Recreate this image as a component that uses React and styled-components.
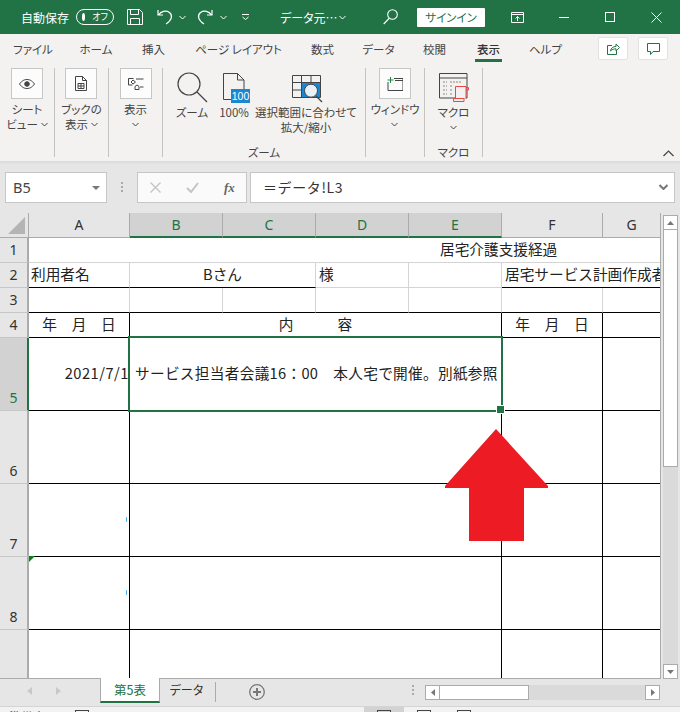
import React from 'react'
import styled, { createGlobalStyle } from 'styled-components'

const GREEN = '#217346'
const CJK = '"Noto Sans CJK JP", "Liberation Sans", sans-serif'

const GlobalStyle = createGlobalStyle`
  html, body { margin: 0; padding: 0; background: #e6e6e6; }
  body { font-family: ${CJK}; overflow: hidden; }
  * { box-sizing: border-box; }
`

const Window = styled.div`
  width: 680px;
  height: 712px;
  display: flex;
  flex-direction: column;
  overflow: hidden;
  font-feature-settings: "palt";
`

/* title bar */
const TitleBar = styled.div`
  height: 34px;
  flex: none;
  background: ${GREEN};
  color: #fff;
  display: flex;
  align-items: center;
  padding-left: 21px;
  font-size: 12px;
`
const TitleItem = styled.div`
  margin-left: ${p => p.$ml || 0}px;
  display: flex;
  align-items: center;
  flex: none;
  width: ${p => (p.$w ? p.$w + 'px' : 'auto')};
  white-space: nowrap;
`
const Toggle = styled.div`
  width: 38px;
  height: 16px;
  border: 1px solid #fff;
  border-radius: 8px;
  display: flex;
  align-items: center;
  padding: 0 5px;
  gap: 7px;
  font-size: 9px;
  line-height: 14px;
  &::before {
    content: "";
    width: 8px;
    height: 8px;
    border-radius: 50%;
    background: #fff;
  }
`
const SignIn = styled.div`
  width: 68px;
  height: 19px;
  background: #fff;
  color: ${GREEN};
  border-radius: 1px;
  font-size: 11.5px;
  line-height: 19px;
  text-align: center;
`

/* ribbon tabs */
const TabRow = styled.div`
  height: 32px;
  flex: none;
  background: #f3f2f1;
  display: flex;
  padding: 3px 12px 0 14px;
  gap: 28px;
  font-size: 11.5px;
  color: #444;
`
const RibbonTab = styled.div`
  width: ${p => p.$w}px;
  flex: none;
  height: 25px;
  line-height: 25px;
  white-space: nowrap;
  display: flex;
  justify-content: center;
  border-bottom: ${p => (p.$active ? `3px solid ${GREEN}` : '3px solid transparent')};
  color: ${p => (p.$active ? '#333' : '#444')};
  font-weight: ${p => (p.$active ? 500 : 400)};
`
const TabActions = styled.div`
  margin-left: auto;
  display: flex;
  gap: 10px;
`
const ActionButton = styled.div`
  width: 30px;
  height: 23px;
  background: #fff;
  border: 1px solid #e3e2e1;
  border-radius: 2px;
  display: flex;
  align-items: center;
  justify-content: center;
`

/* ribbon body */
const Ribbon = styled.div`
  height: 95px;
  flex: none;
  background: #f3f2f1;
  display: flex;
  padding-top: 2px;
  padding-bottom: 4px;
  font-size: 11.5px;
  line-height: 15px;
  color: #444;
`
const RibbonGroup = styled.div`
  width: ${p => p.$w}px;
  flex: none;
  border-right: 1px solid #c4c3c2;
  display: flex;
  flex-direction: column;
`
const GroupButtons = styled.div`
  display: flex;
  justify-content: ${p => (p.$fit ? 'flex-start' : 'center')};
`
const GroupLabel = styled.div`
  margin-top: auto;
  margin-bottom: -2px;
  text-align: center;
  line-height: 14px;
`
const BigButton = styled.div`
  display: flex;
  flex-direction: column;
  align-items: center;
  text-align: center;
  white-space: nowrap;
  width: ${p => (p.$w ? p.$w + 'px' : 'auto')};
`
const IconBox = styled.div`
  width: 32px;
  height: 31px;
  background: #fcfcfc;
  border: 1px solid #c6c6c6;
  display: flex;
  align-items: center;
  justify-content: center;
  margin-bottom: 3px;
`
const BareIcon = styled.div`
  height: 35px;
  display: flex;
  align-items: flex-end;
  justify-content: center;
  margin-bottom: 2px;
  padding-left: ${p => p.$pl || 0}px;
`
const ButtonLabel = styled.div`
  display: flex;
  align-items: center;
  justify-content: center;
  gap: 3px;
  height: 15px;
`
const CollapseButton = styled.div`
  margin-left: auto;
  align-self: flex-end;
  margin-right: 6px;
  line-height: 0;
`

/* formula bar */
const FormulaBar = styled.div`
  height: 52px;
  flex: none;
  background: linear-gradient(#dcdbda, #e6e6e6 4px);
  display: flex;
  align-items: flex-start;
  padding: 11px 5px 0;
`
const NameBox = styled.div`
  width: 102px;
  height: 31px;
  background: #fff;
  border: 1px solid #c6c6c6;
  display: flex;
  align-items: center;
  justify-content: space-between;
  padding: 0 6px 0 7px;
  font: 14.5px/29px "Noto Sans", sans-serif;
  color: #444;
`
const Grip = styled.div`
  width: 30px;
  display: flex;
  flex-direction: column;
  align-items: center;
  gap: 2px;
  padding-top: 10px;
  & span { width: 2px; height: 2px; background: #aaa; }
`
const FormulaButtons = styled.div`
  width: 110px;
  height: 31px;
  background: #fafafa;
  border: 1px solid #c6c6c6;
  display: flex;
  align-items: center;
  padding-left: 12px;
  gap: 25px;
  margin-right: 3px;
`
const FxLabel = styled.span`
  font: italic bold 13px "Liberation Serif", serif;
  color: #666;
`
const FormulaInput = styled.div`
  flex: 1;
  height: 31px;
  background: #fff;
  border: 1px solid #c6c6c6;
  display: flex;
  align-items: center;
  justify-content: space-between;
  padding: 0 6px 2px 12px;
  font-size: 14px;
  letter-spacing: .6px;
  color: #333;
  font-feature-settings: normal;
`

/* sheet */
const SheetArea = styled.div`
  height: 466px;
  flex: none;
  display: flex;
  background: #e6e6e6;
`
const Grid = styled.div`
  width: 661px;
  flex: none;
  display: grid;
  grid-template-columns: 29px 101px 93px 93px 93px 93px 101px 58px;
  grid-template-rows: 25px 25px 25px 25px 25px 73px 73px 73px 73px 49px;
  border-right: 1px solid #ababab;
  border-bottom: 1px solid #ababab;
  overflow: hidden;
  background: #fff;
  font-feature-settings: normal;
`
const Corner = styled.div`
  background: #e6e6e6;
  border-right: 1px solid #ababab;
  border-bottom: 1px solid #ababab;
  position: relative;
  &::after {
    content: "";
    position: absolute;
    right: 3px;
    bottom: 3px;
    border-style: solid;
    border-width: 0 0 17px 17px;
    border-color: transparent transparent #b4b4b4 transparent;
  }
`
const ColHead = styled.div`
  background: ${p => (p.$selected ? '#d2d2d2' : '#e6e6e6')};
  color: ${p => (p.$selected ? GREEN : '#333')};
  border-right: 1px solid #ababab;
  border-bottom: ${p => (p.$selected ? `2px solid ${GREEN}` : '1px solid #ababab')};
  font: 14px/23px "Noto Sans", sans-serif;
  text-align: center;
`
const RowHead = styled.div`
  background: ${p => (p.$selected ? '#d2d2d2' : '#e6e6e6')};
  color: ${p => (p.$selected ? GREEN : '#333')};
  border-right: ${p => (p.$selected ? `2px solid ${GREEN}` : '2px solid #ababab')};
  border-bottom: 1px solid #c6c6c6;
  font: 14px/19px "Noto Sans", sans-serif;
  display: flex;
  align-items: flex-end;
  justify-content: center;
  padding-bottom: 3px;
`
const Cell = styled.div`
  grid-column: span ${p => p.$span || 1};
  border-right: 1px solid ${p => (p.$right ? '#000' : '#d4d4d4')};
  border-bottom: 1px solid ${p => (p.$bottom ? '#000' : '#d4d4d4')};
  font-size: 14.67px;
  line-height: 22px;
  color: #222;
  white-space: nowrap;
  overflow: ${p => (p.$clip ? 'hidden' : 'visible')};
  position: relative;
  display: flex;
  align-items: center;
  justify-content: ${p => p.$align || 'flex-start'};
  letter-spacing: ${p => p.$ls || 0}px;
  padding: 0 0 2px ${p => p.$pl || 0}px;
`
const DateLabel = styled.span`
  white-space: pre;
`
const Selection = styled.div`
  position: absolute;
  left: -2px;
  top: -2px;
  width: 375px;
  height: 76px;
  border: 2px solid ${GREEN};
  pointer-events: none;
  z-index: 2;
  &::after {
    content: "";
    position: absolute;
    right: -4px;
    bottom: -4px;
    width: 7px;
    height: 7px;
    background: ${GREEN};
    border: 1px solid #fff;
  }
`
const CommentMark = styled.div`
  position: absolute;
  left: 0;
  top: -1px;
  border-style: solid;
  border-width: 6px 6px 0 0;
  border-color: #0b7f14 transparent transparent transparent;
`
const Tick = styled.div`
  position: absolute;
  right: 2px;
  top: 33px;
  width: 1px;
  height: 5px;
  background: #54b4f0;
`
const BigArrow = styled.svg`
  position: absolute;
  left: 445px;
  top: 429px;
  z-index: 3;
`
const VScroll = styled.div`
  flex: 1;
  display: flex;
  flex-direction: column;
  padding: 2px 2px 0 2px;
`
const ScrollBtn = styled.div`
  flex: none;
  background: #fff;
  border: 1px solid #ababab;
  display: flex;
  align-items: center;
  justify-content: center;
  width: 15px;
  height: 15px;
`
const VThumb = styled.div`
  height: 237px;
  flex: none;
  background: #fff;
  border: 1px solid #ababab;
  border-top: none;
`
const VTrack = styled.div`
  flex: 1;
  background: #dadada;
`

/* bottom */
const SheetTabs = styled.div`
  height: 27px;
  flex: none;
  background: #e6e6e6;
  display: flex;
  align-items: flex-start;
  font-size: 12px;
  color: #333;
`
const TabNav = styled.div`
  width: 100px;
  height: 24px;
  display: flex;
  align-items: center;
  justify-content: flex-end;
  gap: 24px;
  padding-right: 39px;
  flex: none;
`
const SheetTab = styled.div`
  flex: none;
  width: ${p => p.$w}px;
  line-height: ${p => (p.$active ? 24 : 22)}px;
  text-align: center;
  font-size: ${p => (p.$active ? 12.5 : 12)}px;
  background: ${p => (p.$active ? '#fff' : 'transparent')};
  color: ${p => (p.$active ? GREEN : '#333')};
  border-left: ${p => (p.$active ? '1px solid #ababab' : 'none')};
  border-right: 1px solid ${p => (p.$active ? '#ababab' : 'transparent')};
  border-bottom: ${p => (p.$active ? `2px solid ${GREEN}` : 'none')};
  margin-top: ${p => (p.$active ? -1 : 0)}px;
  height: ${p => (p.$active ? 25 : 24)}px;
`
const TabDivider = styled.div`
  width: 1px;
  height: 20px;
  margin: 3px 0 0 1px;
  background: #ababab;
`
const AddSheet = styled.div`
  margin: 5px 0 0 33px;
  line-height: 0;
`
const HScroll = styled.div`
  width: 235px;
  height: 15px;
  display: flex;
  margin: 6px 20px 0 auto;
  background: #dadada;
  flex: none;
`
const HThumb = styled.div`
  width: 89px;
  background: #fff;
  border: 1px solid #ababab;
  border-left: none;
`
const HGap = styled.div`
  flex: 1;
`
const TabGrip = styled(Grip)`
  width: 6px;
  padding-top: 6px;
  margin-left: 145px;
  flex: none;
`
const StatusBar = styled.div`
  flex: 1;
  background: #f3f2f1;
  border-top: 1px solid #d4d4d4;
  display: flex;
  font-size: 12px;
  color: #444;
  padding-left: 9px;
  overflow: hidden;
`
const StatusText = styled.div`
  line-height: 16px;
  padding-top: 2px;
  width: 66px;
  flex: none;
`
const ViewButton = styled.div`
  width: 40px;
  height: 6px;
  display: flex;
  justify-content: center;
  background: ${p => (p.$active ? '#d2d2d2' : 'transparent')};
  padding-top: 3px;
`
const ViewGroup = styled.div`
  display: flex;
  margin-left: 275px;
`
const ViewIcon = styled.div`
  width: 14px;
  height: 8px;
  margin-top: ${p => p.$mt || 0}px;
  border: 1px solid #444;
`

const Chevron = ({ color = '#444' }) => (
  <svg width="7" height="5" viewBox="0 0 7 5" fill="none" stroke={color} strokeWidth="1">
    <path d="M0.5 1l3 3 3-3" />
  </svg>
)

function App() {
  return (
    <Window>
      <GlobalStyle />
      <TitleBar>
        <TitleItem $w={47}>自動保存</TitleItem>
        <TitleItem $ml={8}><Toggle>オフ</Toggle></TitleItem>
        <TitleItem $ml={13}>
          <svg width="16" height="16" viewBox="0 0 16 16" fill="none" stroke="#fff">
            <path d="M.5.5h12l3 3v12H.5z" />
            <path d="M3.5.5v5h8v-5M3.5 15.5v-6h9v6" />
          </svg>
        </TitleItem>
        <TitleItem $ml={14}>
          <svg width="16" height="16" viewBox="0 0 16 16" fill="none" stroke="#fff" strokeWidth="1.2">
            <path d="M1 1v5h5M1.5 6C4 2 9 1 12.5 3.5 16 6.5 15 11 9 15" />
          </svg>
        </TitleItem>
        <TitleItem $ml={6}><Chevron color="#fff" /></TitleItem>
        <TitleItem $ml={11}>
          <svg width="16" height="16" viewBox="0 0 16 16" fill="none" stroke="#fff" strokeWidth="1.2">
            <path d="M15 1v5h-5M14.5 6C12 2 7 1 3.5 3.5 0 6.5 1 11 7 15" />
          </svg>
        </TitleItem>
        <TitleItem $ml={7}><Chevron color="#fff" /></TitleItem>
        <TitleItem $ml={15}>
          <svg width="7" height="6" viewBox="0 0 7 6" fill="none" stroke="#fff">
            <path d="M0 .5h7M.5 3l3 2.5 3-2.5" />
          </svg>
        </TitleItem>
        <TitleItem $ml={31} $w={50}>データ元…</TitleItem>
        <TitleItem $ml={9}><Chevron color="#fff" /></TitleItem>
        <TitleItem $ml={37}>
          <svg width="15" height="16" viewBox="0 0 15 16" fill="none" stroke="#fff" strokeWidth="1.1">
            <circle cx="9.5" cy="5.5" r="4.8" />
            <path d="M6 9.5L.7 15" />
          </svg>
        </TitleItem>
        <TitleItem $ml={19}><SignIn>サインイン</SignIn></TitleItem>
        <TitleItem $ml={26}>
          <svg width="13" height="11" viewBox="0 0 13 11" fill="none" stroke="#fff">
            <path d="M.5.5h12v10H.5zM.5 2.5h12M6.5 9V4.5M4.5 6.5l2-2 2 2" />
          </svg>
        </TitleItem>
        <TitleItem $ml={35}>
          <svg width="10" height="1"><rect width="10" height="1" fill="#fff" /></svg>
        </TitleItem>
        <TitleItem $ml={36}>
          <svg width="10" height="10" fill="none" stroke="#fff"><rect x=".5" y=".5" width="9" height="9" /></svg>
        </TitleItem>
        <TitleItem $ml={36}>
          <svg width="11" height="11" fill="none" stroke="#fff"><path d="M.5.5l10 10M10.5.5l-10 10" /></svg>
        </TitleItem>
      </TitleBar>

      <TabRow>
        <RibbonTab $w={38}>ファイル</RibbonTab>
        <RibbonTab $w={32}>ホーム</RibbonTab>
        <RibbonTab $w={27}>挿入</RibbonTab>
        <RibbonTab $w={87}>ページ レイアウト</RibbonTab>
        <RibbonTab $w={25}>数式</RibbonTab>
        <RibbonTab $w={31}>データ</RibbonTab>
        <RibbonTab $w={25}>校閲</RibbonTab>
        <RibbonTab $w={27} $active>表示</RibbonTab>
        <RibbonTab $w={31}>ヘルプ</RibbonTab>
        <TabActions>
          <ActionButton>
            <svg width="13" height="13" viewBox="0 0 13 13" fill="none" stroke={GREEN}>
              <path d="M5 3.5H.5v9h9V9" />
              <path d="M3.5 9C4 6 6 4.5 9 4.5V2l3.5 3.5L9 9V6.8C7 6.8 5 7.5 3.5 9z" />
            </svg>
          </ActionButton>
          <ActionButton>
            <svg width="13" height="12" viewBox="0 0 13 12" fill="none" stroke={GREEN}>
              <path d="M.5.5h12v8H6l-2.5 3v-3h-3z" />
            </svg>
          </ActionButton>
        </TabActions>
      </TabRow>

      <Ribbon>
        <RibbonGroup $w={55}>
          <GroupButtons>
            <BigButton>
              <IconBox>
                <svg width="16" height="10" viewBox="0 0 16 10" fill="none" stroke="#444">
                  <path d="M.5 5C3 1.5 5.5.5 8 .5s5 1 7.5 4.5C13 8.5 10.5 9.5 8 9.5S3 8.5.5 5z" />
                  <circle cx="8" cy="5" r="2.3" fill="#444" />
                </svg>
              </IconBox>
              <ButtonLabel>シート</ButtonLabel>
              <ButtonLabel>ビュー <Chevron /></ButtonLabel>
            </BigButton>
          </GroupButtons>
        </RibbonGroup>
        <RibbonGroup $w={54}>
          <GroupButtons>
            <BigButton>
              <IconBox>
                <svg width="12" height="15" viewBox="0 0 12 15" fill="none" stroke="#444">
                  <path d="M.5.5h7l4 4v10H.5zM7.5.5v4h4M3 7.5h6v5H3zM6 7.5v5M3 10h6" />
                </svg>
              </IconBox>
              <ButtonLabel>ブックの</ButtonLabel>
              <ButtonLabel>表示 <Chevron /></ButtonLabel>
            </BigButton>
          </GroupButtons>
        </RibbonGroup>
        <RibbonGroup $w={54}>
          <GroupButtons>
            <BigButton>
              <IconBox>
                <svg width="16" height="14" viewBox="0 0 16 14" fill="none" stroke="#444">
                  <path d="M.5 6V1.5h5M.5 6v2h4M8 2h7.5M12 10h3.5M5 3l2.5 2-2.5 2-2-2zM7 12.5v-3l2-1.5 2 1.5v3z" />
                </svg>
              </IconBox>
              <ButtonLabel>表示</ButtonLabel>
              <ButtonLabel><Chevron /></ButtonLabel>
            </BigButton>
          </GroupButtons>
        </RibbonGroup>
        <RibbonGroup $w={203}>
          <GroupButtons $fit>
            <BigButton $w={58}>
              <BareIcon>
                <svg width="31" height="31" viewBox="0 0 31 31" fill="none" stroke="#444">
                  <circle cx="12" cy="12" r="11" strokeWidth="1.2" />
                  <path d="M20 20l10 10" strokeWidth="1.2" />
                </svg>
              </BareIcon>
              <ButtonLabel>ズーム</ButtonLabel>
            </BigButton>
            <BigButton $w={26}>
              <BareIcon $pl={5}>
                <svg width="27" height="30" viewBox="0 0 27 30" fill="none">
                  <path d="M.5.5h14l6.500 6.500v9M.5.5v26h8M14.500.5v6.500H21" stroke="#444" />
                  <rect x="8" y="16" width="19" height="14" fill="#1b87d1" />
                  <text x="17.500" y="27" fontSize="10.500" fill="#fff" textAnchor="middle" fontFamily="Liberation Sans">100</text>
                </svg>
              </BareIcon>
              <ButtonLabel>100%</ButtonLabel>
            </BigButton>
            <BigButton $w={118}>
              <BareIcon $pl={3}>
                <svg width="31" height="28" viewBox="0 0 31 28" fill="none">
                  <rect x="9.500" y="7" width="18.500" height="15" fill="#1b87d1" />
                  <path d="M.5.5h28v22H.5zM.5 7.500h28M.5 15h9M9.500.5v22M19 .5v7" stroke="#444" />
                  <circle cx="19" cy="15.700" r="6.500" fill="#e8f1f8" stroke="#444" />
                  <path d="M24 21l6 6" stroke="#444" strokeWidth="1.300" />
                </svg>
              </BareIcon>
              <ButtonLabel>選択範囲に合わせて</ButtonLabel>
              <ButtonLabel>拡大/縮小</ButtonLabel>
            </BigButton>
          </GroupButtons>
          <GroupLabel>ズーム</GroupLabel>
        </RibbonGroup>
        <RibbonGroup $w={59}>
          <GroupButtons>
            <BigButton>
              <IconBox>
                <svg width="16" height="14" viewBox="0 0 16 14" fill="none" stroke="#444">
                  <path d="M1 5v8.500h15V1.500H7" />
                  <path d="M8 3.500h8" />
                  <path d="M3.500 0v6M.5 3h6" stroke="#1e8a3c" />
                </svg>
              </IconBox>
              <ButtonLabel>ウィンドウ</ButtonLabel>
              <ButtonLabel><Chevron /></ButtonLabel>
            </BigButton>
          </GroupButtons>
        </RibbonGroup>
        <RibbonGroup $w={58}>
          <GroupButtons>
            <BigButton>
              <BareIcon>
                <svg width="30" height="30" viewBox="0 0 30 30" fill="none">
                  <path d="M.5.5h27.500v24.500H.5zM.5 5h27.500" stroke="#444" />
                  <path d="M4 9h4M11 9h12M4 13h4M11 13h3M4 17h4M11 17h3M4 21h4M11 21h3" stroke="#888" strokeDasharray="2 1" />
                  <path d="M16.500 25.500V13.500h10.500v12" fill="#f3f2f1" stroke="#ef4444" />
                  <path d="M27 14.500h2.500v2.500H27" stroke="#ef4444" />
                  <path d="M14.500 25.500h10.500v3H14.500z" fill="#f3f2f1" stroke="#ef4444" />
                </svg>
              </BareIcon>
              <ButtonLabel>マクロ</ButtonLabel>
              <ButtonLabel><Chevron /></ButtonLabel>
            </BigButton>
          </GroupButtons>
          <GroupLabel>マクロ</GroupLabel>
        </RibbonGroup>
        <CollapseButton>
          <svg width="11" height="7" viewBox="0 0 11 7" fill="none" stroke="#444" strokeWidth="1.2">
            <path d="M.5 6l5-5 5 5" />
          </svg>
        </CollapseButton>
      </Ribbon>

      <FormulaBar>
        <NameBox>
          B5
          <svg width="8" height="4" viewBox="0 0 8 4"><path d="M0 0h8L4 4z" fill="#777" /></svg>
        </NameBox>
        <Grip><span /><span /><span /></Grip>
        <FormulaButtons>
          <svg width="11" height="11" viewBox="0 0 11 11" fill="none" stroke="#c4c4c4" strokeWidth="1.4">
            <path d="M.5.5l10 10M10.500.5l-10 10" />
          </svg>
          <svg width="13" height="11" viewBox="0 0 13 11" fill="none" stroke="#c4c4c4" strokeWidth="2">
            <path d="M1 6l4 4 7-9" />
          </svg>
          <FxLabel>fx</FxLabel>
        </FormulaButtons>
        <FormulaInput>
          ＝データ!L3
          <svg width="9" height="6" viewBox="0 0 9 6" fill="none" stroke="#777" strokeWidth="2">
            <path d="M.5 1l4 4 4-4" />
          </svg>
        </FormulaInput>
      </FormulaBar>

      <SheetArea>
        <Grid>
          <Corner />
          <ColHead>A</ColHead>
          <ColHead $selected>B</ColHead>
          <ColHead $selected>C</ColHead>
          <ColHead $selected>D</ColHead>
          <ColHead $selected>E</ColHead>
          <ColHead>F</ColHead>
          <ColHead>G</ColHead>

          <RowHead>1</RowHead>
          <Cell $span={7} $pl={411}>居宅介護支援経過</Cell>

          <RowHead>2</RowHead>
          <Cell $bottom $pl={2}>利用者名</Cell>
          <Cell $span={2} $bottom $align="center">Bさん</Cell>
          <Cell $pl={3}>様</Cell>
          <Cell />
          <Cell $span={2} $bottom $clip $pl={3}>居宅サービス計画作成者</Cell>

          <RowHead>3</RowHead>
          <Cell $bottom />
          <Cell $bottom />
          <Cell $bottom />
          <Cell $bottom />
          <Cell $bottom />
          <Cell $bottom />
          <Cell $bottom />

          <RowHead>4</RowHead>
          <Cell $bottom $right $align="center"><DateLabel>年　月　日</DateLabel></Cell>
          <Cell $span={4} $bottom $right $align="center"><DateLabel>内　　　容</DateLabel></Cell>
          <Cell $bottom $right $align="center"><DateLabel>年　月　日</DateLabel></Cell>
          <Cell $bottom />

          <RowHead $selected>5</RowHead>
          <Cell $bottom $right $align="flex-end" $ls={0.5}>2021/7/1</Cell>
          <Cell $span={4} $bottom $right $pl={5} $ls={0.3}>
            サービス担当者会議16：00　本人宅で開催。別紙参照
            <Selection />
          </Cell>
          <Cell $bottom $right />
          <Cell $bottom />

          <RowHead>6</RowHead>
          <Cell $bottom $right />
          <Cell $span={4} $bottom $right />
          <Cell $bottom $right />
          <Cell $bottom />

          <RowHead>7</RowHead>
          <Cell $bottom $right><Tick /></Cell>
          <Cell $span={4} $bottom $right />
          <Cell $bottom $right />
          <Cell $bottom />

          <RowHead>8</RowHead>
          <Cell $bottom $right><CommentMark /><Tick /></Cell>
          <Cell $span={4} $bottom $right />
          <Cell $bottom $right />
          <Cell $bottom />

          <RowHead />
          <Cell $right />
          <Cell $span={4} $right />
          <Cell $right />
          <Cell />
        </Grid>
        <VScroll>
          <ScrollBtn>
            <svg width="7" height="4"><path d="M3.500 0L7 4H0z" fill="#777" /></svg>
          </ScrollBtn>
          <VThumb />
          <VTrack />
          <ScrollBtn>
            <svg width="7" height="4"><path d="M3.500 4L7 0H0z" fill="#777" /></svg>
          </ScrollBtn>
        </VScroll>
        <BigArrow width="103" height="112" viewBox="0 0 103 112">
          <path d="M51 0L103 57V59H79V112H24V59H0V57z" fill="#ed1c24" />
        </BigArrow>
      </SheetArea>

      <SheetTabs>
        <TabNav>
          <svg width="5" height="8"><path d="M5 0v8L0 4z" fill="#c8c8c8" /></svg>
          <svg width="5" height="8"><path d="M0 0v8l5-4z" fill="#c8c8c8" /></svg>
        </TabNav>
        <SheetTab $active $w={60}>第5表</SheetTab>
        <SheetTab $w={54}>データ</SheetTab>
        <TabDivider />
        <AddSheet>
          <svg width="16" height="16" viewBox="0 0 16 16" fill="none" stroke="#777">
            <circle cx="8" cy="8" r="7.300" strokeWidth="1.300" />
            <path d="M8 4v8M4 8h8" strokeWidth="2" />
          </svg>
        </AddSheet>
        <TabGrip><span /><span /><span /></TabGrip>
        <HScroll>
          <ScrollBtn>
            <svg width="4" height="7"><path d="M0 3.500L4 0v7z" fill="#777" /></svg>
          </ScrollBtn>
          <HThumb />
          <HGap />
          <ScrollBtn>
            <svg width="4" height="7"><path d="M4 3.500L0 0v7z" fill="#777" /></svg>
          </ScrollBtn>
        </HScroll>
      </SheetTabs>

      <StatusBar>
        <StatusText>準備完了</StatusText>
        <ViewIcon $mt={3} />
        <ViewGroup>
          <ViewButton $active><ViewIcon /></ViewButton>
          <ViewButton><ViewIcon /></ViewButton>
          <ViewButton><ViewIcon /></ViewButton>
        </ViewGroup>
      </StatusBar>
    </Window>
  )
}

export default App
